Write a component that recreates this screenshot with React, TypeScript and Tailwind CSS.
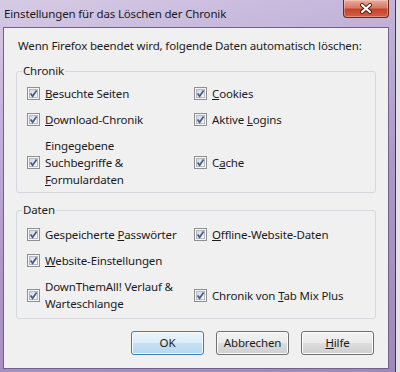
import React from "react";

function CheckBox() {
  return (
    <svg width="13" height="13" viewBox="0 0 13 13" className="shrink-0">
      <defs>
        <linearGradient id="cbInner" x1="0" y1="0" x2="1" y2="1">
          <stop offset="0" stopColor="#d2d5d9" />
          <stop offset="1" stopColor="#fbfbfb" />
        </linearGradient>
      </defs>
      <rect x="0.5" y="0.5" width="12" height="12" fill="#f6f6f6" stroke="#8e8f8f" />
      <rect x="2.5" y="2.5" width="8" height="8" fill="url(#cbInner)" stroke="#b5b9be" />
      <path d="M3.6 6.4 L5.6 9.2 L9.6 3.4" fill="none" stroke="#45598c" strokeWidth="1.7" />
    </svg>
  );
}

function Row({ children }: { children: React.ReactNode }) {
  return (
    <div className="flex items-center gap-[5px]">
      <CheckBox />
      <div className="leading-[17px]">{children}</div>
    </div>
  );
}

function Btn({ children, primary }: { children: React.ReactNode; primary?: boolean }) {
  return (
    <div
      className={
        primary
          ? "w-[73px] h-[24px] rounded-[3px] border border-[#3c7fb1] bg-[linear-gradient(to_bottom,#eaf5fc_0%,#dcedf8_50%,#c6e2f4_50%,#b6d8ef_100%)] shadow-[inset_0_0_0_1px_#f4fbff] flex items-center justify-center"
          : "w-[73px] h-[24px] rounded-[3px] border border-[#707070] bg-[linear-gradient(to_bottom,#f2f2f2_0%,#ebebeb_50%,#dddddd_50%,#cfcfcf_100%)] shadow-[inset_0_0_0_1px_#fcfcfc] flex items-center justify-center"
      }
    >
      {children}
    </div>
  );
}

export default function App() {
  return (
    <div className="w-[400px] h-[372px] flex overflow-hidden bg-[#e2e2e2] font-['Noto_Sans',sans-serif] text-[11.5px] tracking-[-0.15px] text-[#1b1b1b]">
      {/* window frame */}
      <div className="w-[396px] h-full flex flex-col border-r border-[#3f3550] bg-[linear-gradient(165deg,#d6cbe5_0%,#c2b2d9_25%,#ad98cb_55%,#9e88bf_100%)]">
        <div className="h-[27px] flex items-start">
          <div className="pl-[4px] pt-[6px] leading-[16px] text-[#1a1a1a]">
            Einstellungen für das Löschen der Chronik
          </div>
          <div className="ml-auto mr-[6px] w-[46px] h-[18px] rounded-b-[4px] border border-t-0 border-[#6a2a22] bg-[linear-gradient(to_bottom,#e9ab9c_0%,#d77a66_45%,#c5432c_55%,#d55f43_100%)] shadow-[inset_0_0_0_1px_rgba(255,255,255,0.3)] flex items-center justify-center">
            <svg width="14" height="11" viewBox="0 0 14 11">
              <path d="M3 2 L11 9 M11 2 L3 9" stroke="#4a1d18" strokeWidth="4" strokeLinecap="round" />
              <path d="M3 2 L11 9 M11 2 L3 9" stroke="#ffffff" strokeWidth="2.2" strokeLinecap="round" />
            </svg>
          </div>
        </div>

        {/* client area */}
        <div className="ml-[3px] w-[386px] flex-1 mb-[3px] border border-[#6e6285] bg-[#f0f0f0] flex flex-col">
          <div className="pl-[14px] pt-[10px] leading-[16px]">
            Wenn Firefox beendet wird, folgende Daten automatisch löschen:
          </div>

          <fieldset className="ml-[12px] mt-[9px] w-[360px] rounded-[3px] border border-[#d5d9dd] pl-[10px] pt-[6px] pb-[4px]">
            <legend className="-ml-[5px] px-[1px] leading-[16px]">Chronik</legend>
            <div className="grid grid-cols-[167px_1fr] gap-y-[9px] items-center">
              <Row>
                <u>B</u>esuchte Seiten
              </Row>
              <Row>
                <u>C</u>ookies
              </Row>
              <Row>
                <u>D</u>ownload-Chronik
              </Row>
              <Row>
                Aktive <u>L</u>ogins
              </Row>
              <Row>
                Eingegebene
                <br />
                Suchbegriffe &amp;
                <br />
                <u>F</u>ormulardaten
              </Row>
              <Row>
                C<u>a</u>che
              </Row>
            </div>
          </fieldset>

          <fieldset className="ml-[12px] mt-[9px] w-[360px] rounded-[3px] border border-[#d5d9dd] pl-[10px] pt-[8px] pb-[6px]">
            <legend className="-ml-[5px] px-[1px] leading-[16px]">Daten</legend>
            <div className="grid grid-cols-[167px_1fr] gap-y-[9px] items-center">
              <Row>
                Gespeicherte <u>P</u>asswörter
              </Row>
              <Row>
                <u>O</u>ffline-Website-Daten
              </Row>
              <Row>
                <u>W</u>ebsite-Einstellungen
              </Row>
              <div />
              <Row>
                DownThemAll! Verlauf &amp;
                <br />
                Warteschlange
              </Row>
              <Row>
                Chronik von <u>T</u>ab Mix Plus
              </Row>
            </div>
          </fieldset>

          <div className="mt-[12px] pr-[14px] flex justify-end gap-[12px]">
            <Btn primary>OK</Btn>
            <Btn>Abbrechen</Btn>
            <Btn>
              <u>H</u>ilfe
            </Btn>
          </div>
        </div>
      </div>
      <div className="flex-1" />
    </div>
  );
}
